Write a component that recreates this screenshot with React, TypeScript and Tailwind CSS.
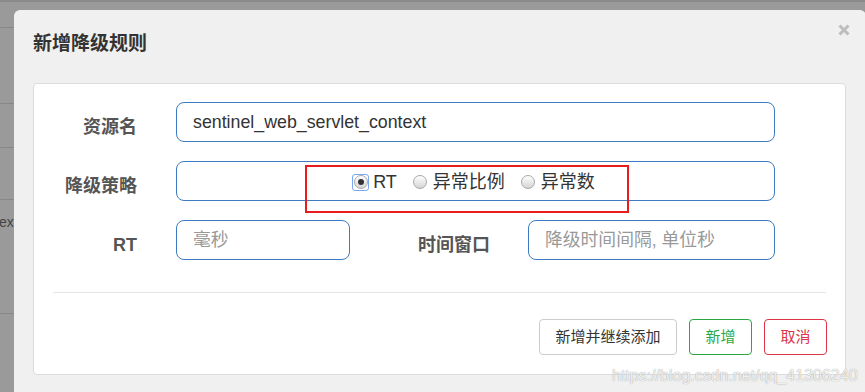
import React from 'react'

const font = "font-['Liberation_Sans','Noto_Sans_CJK_SC',sans-serif]"

const Radio: React.FC<{ checked?: boolean; focused?: boolean }> = ({ checked, focused }) => (
  <span
    className={`w-[17px] h-[17px] flex items-center justify-center rounded-[3px] ${
      focused ? 'border-[1.5px] border-[#7aa7f5]' : 'border-[1.5px] border-transparent'
    }`}
  >
    <span className="w-[14px] h-[14px] shrink-0 rounded-full border border-[#a8a8a8] bg-[linear-gradient(#ffffff,#d4d4d4)] flex items-center justify-center">
      {checked && <span className="w-[6px] h-[6px] rounded-full bg-[#333]" />}
    </span>
  </span>
)

const Label: React.FC<{ text: string; className?: string }> = ({ text, className }) => (
  <div className={`text-right pt-[9px] text-[18px] font-bold text-[#555] leading-none ${className ?? ''}`}>
    {text}
  </div>
)

const inputCls =
  'h-[40px] rounded-[8px] border border-[#3c7bbf] bg-white pl-[16px] text-[17.8px] text-[#333] placeholder:text-[#999] outline-none'

export default function App() {
  return (
    <div className={`w-[865px] h-[392px] bg-[#9a9a9a] border-t-2 border-[#8a8a8a] flex overflow-hidden relative ${font}`}>
      {/* page behind the overlay */}
      <div className="w-[14px] shrink-0 flex flex-col">
        <div className="h-[26px] border-b border-[#888]" />
        <div className="h-[76px] border-b border-[#888]" />
        <div className="h-[44px] border-b border-[#888]" />
        <div className="h-[52px] border-b border-[#888] overflow-hidden" />
        <div className="h-[114px] border-b border-[#888] overflow-hidden whitespace-nowrap">
          <div className="pt-[12px] text-[14px] text-[#444] -ml-[1px]">ex</div>
        </div>
      </div>

      <div className="flex-1 pt-[8px] pr-[1px] flex flex-col">
        <div className="flex-1 bg-[#f0f0f0] rounded-t-[6px] relative pl-[19px] pr-[20px] flex flex-col">
          <div className="pt-[21px] h-[73px]">
            <h4 className="text-[19px] font-bold text-[#333] leading-[26px]">新增降级规则</h4>
          </div>
          <svg
            className="absolute right-[16px] top-[14px]"
            width="12"
            height="12"
            viewBox="0 0 12 12"
          >
            <path d="M1.5 1.5 L10.5 10.5 M10.5 1.5 L1.5 10.5" stroke="#bdbdbd" strokeWidth="3" />
          </svg>

          <div className="bg-white border border-[#dcdcdc] rounded-[4px] flex flex-col">
            <div className="pt-[18px] pr-[70px] flex flex-col gap-[19px]">
              <div className="flex items-center">
                <Label text="资源名" className="w-[103px]" />
                <input className={`${inputCls} ml-[39px] flex-1`} readOnly value="sentinel_web_servlet_context" />
              </div>

              <div className="flex items-center">
                <Label text="降级策略" className="w-[103px]" />
                <div className="ml-[39px] flex-1 h-[40px] rounded-[8px] border border-[#3c7bbf] bg-white relative flex items-center justify-center text-[18px] text-[#333]">
                  <div className="flex items-center pt-[2px] -ml-[4px]">
                    <Radio checked focused />
                    <span className="ml-[4px] leading-none">RT</span>
                    <span className="ml-[15px]"><Radio /></span>
                    <span className="ml-[4px] leading-none">异常比例</span>
                    <span className="ml-[15px]"><Radio /></span>
                    <span className="ml-[4px] leading-none">异常数</span>
                  </div>
                  <div className="absolute left-[128px] top-[3px] w-[324px] h-[48px] border-2 border-[#e81c1c]" />
                </div>
              </div>

              <div className="flex items-center">
                <Label text="RT" className="w-[103px]" />
                <input className={`${inputCls} ml-[39px] w-[174px]`} readOnly placeholder="毫秒" />
                <Label text="时间窗口" className="w-[140px]" />
                <input className={`${inputCls} ml-[38px] flex-1 min-w-0`} readOnly placeholder="降级时间间隔, 单位秒" />
              </div>
            </div>

            <div className="mt-[32px] mx-[19px] h-px bg-[#e5e5e5]" />

            <div className="px-[18px] pt-[26px] pb-[19px] flex justify-end gap-[12px] text-[15px]">
              <button className="h-[36px] w-[138px] rounded-[4px] border border-[#cccccc] bg-white text-[#333]">
                新增并继续添加
              </button>
              <button className="h-[36px] w-[63px] rounded-[4px] border border-[#28a745] bg-white text-[#28a745]">
                新增
              </button>
              <button className="h-[36px] w-[63px] rounded-[4px] border border-[#dc3545] bg-white text-[#dc3545]">
                取消
              </button>
            </div>
          </div>
        </div>
      </div>

      <div className="absolute left-[612px] top-[362px] text-[16px] text-[rgba(255,255,255,0.85)] [text-shadow:0_0_1px_#8a8a8a] whitespace-nowrap">
        https://blog.csdn.net/qq_41306240
      </div>
    </div>
  )
}
